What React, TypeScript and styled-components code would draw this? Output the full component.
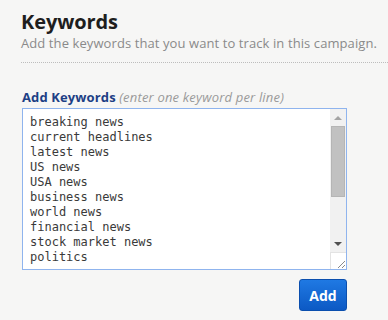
import React from "react";
import styled, { createGlobalStyle } from "styled-components";

const Global = createGlobalStyle`
  html, body { margin: 0; padding: 0; }
  body {
    background: #f6f6f5;
    font-family: "Open Sans", "Liberation Sans", sans-serif;
    width: 388px;
    height: 320px;
    overflow: hidden;
  }
`;

const Page = styled.div`
  padding: 10px 0 0 21px;
`;

const Header = styled.header`
  padding-bottom: 10px;
  border-bottom: 1px dotted #bdbdbd;
`;

const Title = styled.h1`
  margin: 0;
  font-size: 20px;
  line-height: 24px;
  font-weight: 700;
  color: #1e1e1e;
  letter-spacing: -0.1px;
`;

const Subtitle = styled.p`
  margin: 0;
  font-size: 13px;
  line-height: 18px;
  color: #8a8a8a;
  letter-spacing: 0.09px;
`;

const Form = styled.form`
  width: 325px;
  margin: 25px 0 0 1px;
  display: flex;
  flex-direction: column;
`;

const Label = styled.label`
  font-size: 13px;
  line-height: 18px;
  font-weight: 700;
  color: #1d3f85;
  margin-bottom: 2px;
  letter-spacing: 0.12px;
`;

const Hint = styled.span`
  font-weight: 400;
  font-style: italic;
  color: #9a9a9a;
  letter-spacing: 0.18px;
`;

const Field = styled.div`
  display: flex;
  height: 160px;
  border: 1px solid #8fb4ee;
  background: #fff;
`;

const Area = styled.textarea`
  flex: 1;
  border: none;
  outline: none;
  resize: none;
  overflow: hidden;
  margin: 0;
  padding: 6px 7px;
  font-family: "DejaVu Sans Mono", "Liberation Mono", monospace;
  font-size: 12px;
  line-height: 15px;
  color: #3a3a3a;
  background: transparent;
`;

const ScrollCol = styled.div`
  width: 16px;
  display: flex;
  flex-direction: column;
  background: #f1f1f1;
`;

const ArrowBtn = styled.div`
  height: 17px;
  display: flex;
  align-items: center;
  justify-content: center;
`;

const Arrow = styled.span<{ $dir: "up" | "down" }>`
  width: 0;
  height: 0;
  border-left: 4px solid transparent;
  border-right: 4px solid transparent;
  ${(p) =>
    p.$dir === "up"
      ? "border-bottom: 4px solid #a3a3a3;"
      : "border-top: 4px solid #505050;"}
`;

const Track = styled.div`
  flex: 1;
  padding: 0 1px 0 1px;
`;

const Thumb = styled.div`
  height: 71px;
  background: #c1c1c1;
  border: 1px solid #b5b5b5;
  box-sizing: border-box;
`;

const Corner = styled.div`
  height: 17px;
  background: #fff;
  border-top: 1px solid #e3e3e3;
  border-left: 1px solid #e3e3e3;
  box-sizing: border-box;
  display: flex;
  align-items: flex-end;
  justify-content: flex-end;
`;

const Actions = styled.div`
  display: flex;
  justify-content: flex-end;
  margin-top: 9px;
`;

const AddButton = styled.button`
  width: 48px;
  height: 32px;
  padding: 0;
  border: 1px solid #0b4fae;
  border-radius: 3px;
  background: linear-gradient(#1f79e3, #0c59c4);
  color: #fff;
  font-family: "Open Sans", "Liberation Sans", sans-serif;
  font-weight: 700;
  font-size: 14px;
  cursor: pointer;
`;

const keywords = [
  "breaking news",
  "current headlines",
  "latest news",
  "US news",
  "USA news",
  "business news",
  "world news",
  "financial news",
  "stock market news",
  "politics",
].join("\n");

export default function App() {
  return (
    <Page>
      <Global />
      <Header>
        <Title>Keywords</Title>
        <Subtitle>Add the keywords that you want to track in this campaign.</Subtitle>
      </Header>
      <Form onSubmit={(e) => e.preventDefault()}>
        <Label htmlFor="kw">
          Add Keywords <Hint>(enter one keyword per line)</Hint>
        </Label>
        <Field>
          <Area id="kw" defaultValue={keywords} spellCheck={false} />
          <ScrollCol>
            <ArrowBtn>
              <Arrow $dir="up" />
            </ArrowBtn>
            <Track>
              <Thumb />
            </Track>
            <ArrowBtn>
              <Arrow $dir="down" />
            </ArrowBtn>
            <Corner>
              <svg width="10" height="10" viewBox="0 0 10 10">
                <path d="M9 2 L2 9 M9 6 L6 9" stroke="#8a8a8a" strokeWidth="1" />
              </svg>
            </Corner>
          </ScrollCol>
        </Field>
        <Actions>
          <AddButton type="submit">Add</AddButton>
        </Actions>
      </Form>
    </Page>
  );
}
